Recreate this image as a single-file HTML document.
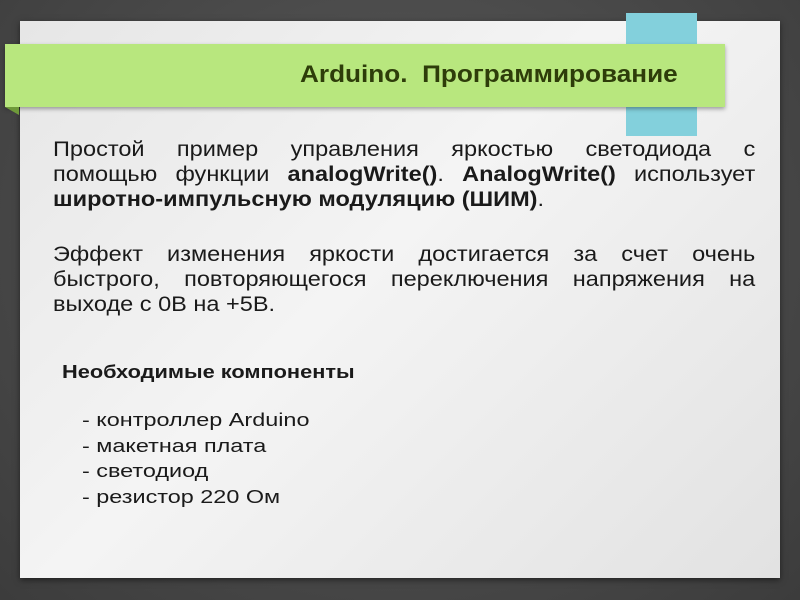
<!DOCTYPE html>
<html><head><meta charset="utf-8"><style>
html,body{margin:0;padding:0}
body{width:800px;height:600px;overflow:hidden;position:relative;background:radial-gradient(ellipse at 50% 40%,#5a5a5a,#3c3c3c);font-family:"Liberation Sans",sans-serif;color:#1a1a1a}
.card{position:absolute;left:20px;top:21px;width:760px;height:557px;background:linear-gradient(135deg,#e6e6e6,#f4f4f4 45%,#e2e2e2);box-shadow:0 2px 6px rgba(0,0,0,.5)}
.ribbon{position:absolute;left:626px;top:13px;width:71px;height:123px;background:#83d0dc}
.green{position:absolute;left:5px;top:44px;width:720px;height:63px;background:#b8e77e;box-shadow:0 2px 4px rgba(0,0,0,.35)}
.gfold{position:absolute;left:5px;top:107px;width:0;height:0;border-top:8px solid #6f9a3a;border-left:14px solid transparent}
.title{position:absolute;left:300px;top:61px;font-size:24px;font-weight:bold;color:#2e3d0a;white-space:nowrap;transform:scaleX(1.09);transform-origin:left}
.p{position:absolute;left:53px;width:627px;font-size:21px;line-height:25px;text-align:justify;text-align-last:left;transform:scaleX(1.12);transform-origin:left top}
.p .l{display:block;text-align:justify;text-align-last:justify;white-space:nowrap}
.p .l.last{text-align-last:left}
h3{position:absolute;left:62px;top:362px;margin:0;font-size:18px;white-space:nowrap;transform:scaleX(1.21);transform-origin:left}
.list{position:absolute;left:82px;top:408px;font-size:18px;line-height:25.5px;white-space:nowrap;transform:scaleX(1.3);transform-origin:left top}
</style></head><body>
<div class="card"></div>
<div class="ribbon"></div>
<div class="green"></div>
<div class="gfold"></div>
<div class="title">Arduino.&nbsp; Программирование</div>
<div class="p" style="top:137px"><span class="l">Простой пример управления яркостью светодиода с</span><span class="l">помощью функции <b>analogWrite()</b>. <b>AnalogWrite()</b> использует</span><span class="l last"><b>широтно-импульсную модуляцию (ШИМ)</b>.</span></div>
<div class="p" style="top:242px">Эффект изменения яркости достигается за счет очень быстрого, повторяющегося переключения напряжения на выходе с 0В на +5В.</div>
<h3>Необходимые компоненты</h3>
<div class="list">- контроллер Arduino<br>- макетная плата<br>- светодиод<br>- резистор 220 Ом</div>
</body></html>
